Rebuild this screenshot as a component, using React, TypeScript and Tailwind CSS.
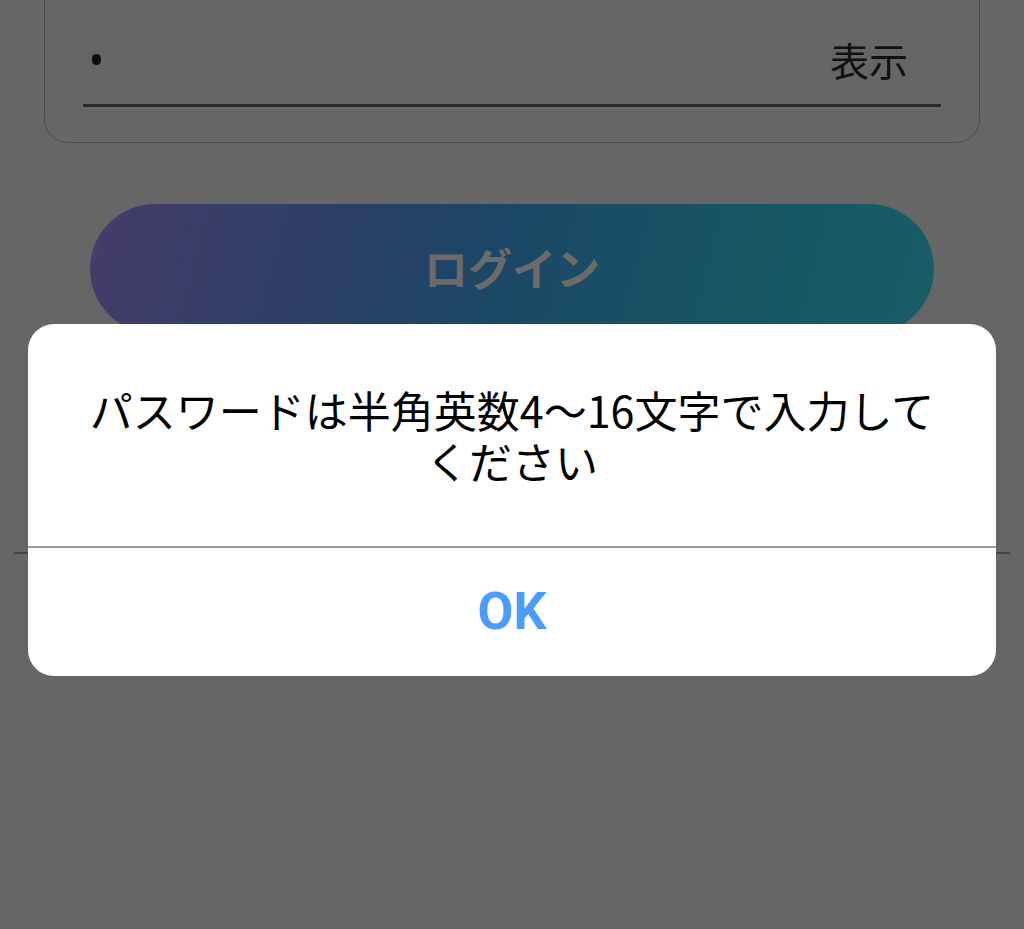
const jp = "font-['Noto_Sans_CJK_JP','Noto_Sans',sans-serif]";

function PasswordCard() {
  return (
    <div className="mx-[44px] -mt-[40px] rounded-[24px] border-[1.5px] border-[#4b4b4b] px-[38px] pt-[71px] pb-[35px]">
      <div className="flex h-[75px] items-center justify-between border-b-[3px] border-[#2b2b2b] pb-[10px] pl-[9px] pr-[33px]">
        {/* masked password character */}
        <div className="mb-[8px] h-[11px] w-[9px] rounded-full bg-[#0c0c0c]" />
        <span className={`${jp} mb-[8px] text-[39px] leading-none text-[#111111]`}>表示</span>
      </div>
    </div>
  );
}

function LoginButton() {
  return (
    <div className="mx-[90px] mt-[61px] flex h-[130px] items-center justify-center rounded-full bg-[linear-gradient(105deg,#463c6b_0%,#2a3f66_30%,#1a4866_50%,#185563_75%,#175d67_100%)]">
      <span className={`${jp} mb-[4px] text-[44px] font-bold leading-none text-[#6b6b6b]`}>ログイン</span>
    </div>
  );
}

function AlertDialog() {
  return (
    <div className="absolute inset-0">
      <div className="absolute left-[28px] right-[28px] top-[324px] overflow-hidden rounded-[26px] bg-white">
        <div className="flex h-[222px] items-center justify-center px-[52px]">
          <p className={`${jp} text-center text-[43px] leading-[51px] text-black`}>
            パスワードは半角英数4〜16文字で入力してください
          </p>
        </div>
        <div className="h-[2px] bg-[#9a9a9a]" />
        <button className="flex h-[128px] w-full items-center justify-center">
          <span className="font-['Roboto','Noto_Sans',sans-serif] text-[52px] font-bold leading-none text-[#4b9cff]">OK</span>
        </button>
      </div>
    </div>
  );
}

export default function App() {
  return (
    <div className="relative h-[929px] w-[1024px] overflow-hidden bg-[#666666]">
      <PasswordCard />
      <LoginButton />
      <div className="mx-[14px] mt-[218px] h-[2px] bg-[#454545]" />
      <AlertDialog />
    </div>
  );
}
